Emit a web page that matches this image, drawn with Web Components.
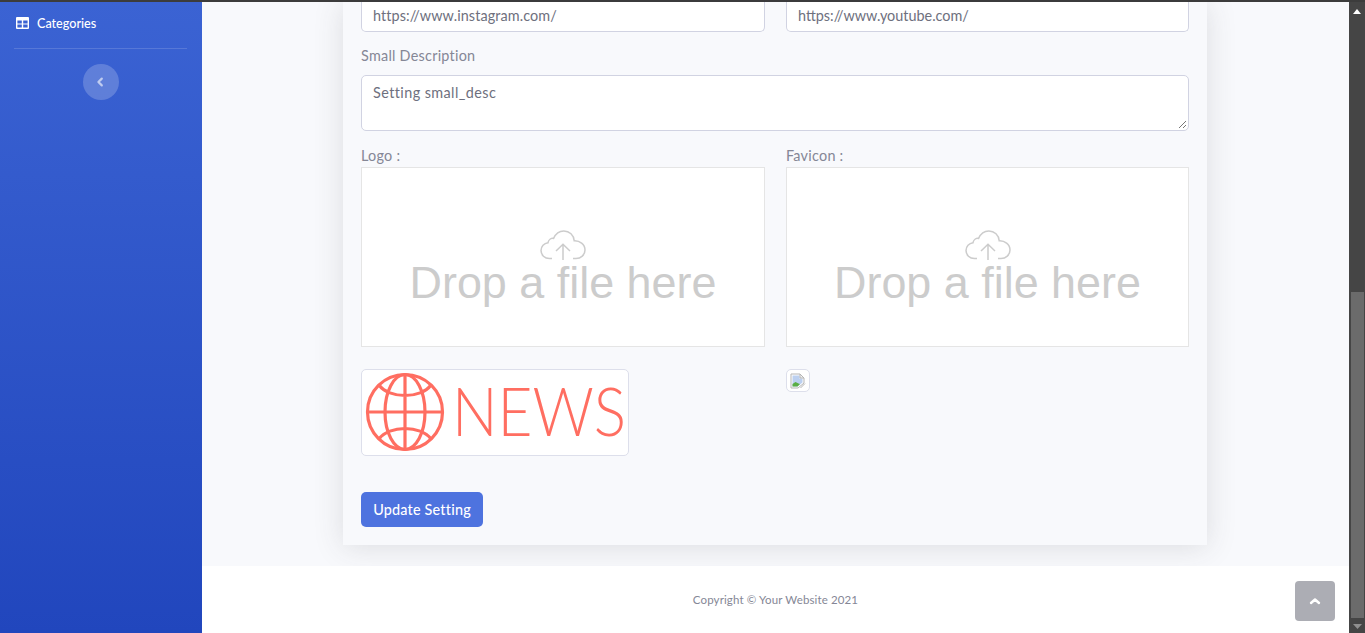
<!DOCTYPE html>
<html><head><meta charset="utf-8"><style>
html,body{margin:0;padding:0;height:633px;overflow:hidden;background:#f8f9fc}
body{font-family:Lato,"Open Sans",sans-serif}
</style></head><body>
<app-shell>
  <side-bar slot="side">
    <nav-item>Categories</nav-item>
  </side-bar>
  <setting-form slot="main"></setting-form>
  <page-footer slot="footer">Copyright © Your Website 2021</page-footer>
  <fake-scrollbar slot="bar"></fake-scrollbar>
</app-shell>
<script>
function def(name, css, html){
  customElements.define(name, class extends HTMLElement{
    constructor(){super();this.attachShadow({mode:'open'}).innerHTML='<style>'+css+'</style>'+html;}
  });
}
def('app-shell',`
 :host{display:flex;flex-direction:column;height:633px;width:1365px;position:relative;overflow:hidden}
 .strip{height:2px;background:#3c3c3c;flex:none}
 .row{display:flex;flex:1;min-height:0}
 .col{flex:1;display:flex;flex-direction:column;min-width:0}
 .body{flex:1;min-height:0}
`,`<div class="strip"></div><div class="row"><slot name="side"></slot><div class="col"><div class="body"><slot name="main"></slot></div><slot name="footer"></slot></div><slot name="bar"></slot></div>`);
def('side-bar',`
 :host{display:block;width:202px;flex:none;background:linear-gradient(180deg,#3b63d3 0%,#2146bd 100%);box-sizing:border-box;padding:0 15px}
 .hr{height:1px;background:rgba(255,255,255,.15);margin:4px 0 15px -1px}
 .toggle{width:36px;height:36px;border-radius:50%;background:rgba(255,255,255,.2);margin:0 auto;display:flex;align-items:center;justify-content:center}
 svg{display:block;margin-left:-2px}
`,`<slot></slot><div class="hr"></div><div class="toggle"><svg width="8" height="10" viewBox="0 0 8 10"><path d="M5.8 1.6L2.4 5l3.4 3.4" fill="none" stroke="#fff" stroke-opacity=".6" stroke-width="2.2" stroke-linecap="round" stroke-linejoin="round"/></svg></div>`);
def('nav-item',`
 :host{display:flex;align-items:center;gap:8px;height:42px;padding-left:1px;color:#fff;font:500 12.6px Lato,sans-serif;box-sizing:border-box}
 svg{display:block;flex:none}
`,`<svg width="13" height="12" viewBox="0 0 13 12"><path fill="#fff" fill-rule="evenodd" d="M1 0h11a1 1 0 0 1 1 1v10a1 1 0 0 1-1 1H1a1 1 0 0 1-1-1V1a1 1 0 0 1 1-1zm.4 3.600v2.800h4.400V3.600zm5.800 0v2.800h4.400V3.600zM1.400 7.400v3.200h4.400V7.400zm5.800 0v3.200h4.400V7.400z"/></svg><span><slot></slot></span>`);
def('text-field',`
 :host{display:block;box-sizing:border-box;background:#fff;border:1px solid #d1d3e2;border-radius:5px;color:#6e707e;font:400 14.4px Lato,sans-serif;padding:0 11px;letter-spacing:.25px}
`,`<slot></slot>`);
def('drop-zone',`
 :host{display:flex;flex-direction:column;align-items:center;box-sizing:border-box;height:180px;background:#fff;border:1px solid #e5e5e5;padding-top:62px;color:#ccc;font:400 44.9px/1 "Liberation Sans",Arial,sans-serif}
 svg{display:block;margin-bottom:1px;position:relative}
`,`<svg width="46" height="30" viewBox="0 0 46 30" fill="none" stroke="#ccc" stroke-width="1.500"><path d="M12 28.5H9.5C4.6 28.5 1 25 1 20.6c0-4 3-7.4 7-7.9C8.6 9.700 11 8 13.600 8.400 15.600 3.800 19.500 1 23.800 1c5.700 0 10 4.300 10.400 9.700 5.300-.3 10.800 3.500 10.800 9.300 0 5-4.200 8.500-9 8.500H33"/><path d="M23 30V14.500M16 21l7-6.800L30 21"/></svg><span>Drop a file here</span>`);
def('news-logo',`
 :host{display:block;box-sizing:border-box;width:268px;height:87px;background:#fff;border:1px solid #dddfeb;border-radius:5px}
 svg{display:block}
 text{font-family:Lato,sans-serif;font-weight:300}
`,`<svg width="266" height="85" viewBox="0 0 266 85" fill="none" stroke="#ff6e61" stroke-width="3.2"><g transform="translate(43,42)"><circle r="37.500"/><ellipse rx="20" ry="37.500"/><path d="M0-37.500V37.500M-37.500 0H37.500M-26-27C-16-13 16-13 26-27M-26 27C-16 13 16 13 26 27"/></g><text transform="translate(90,66) scale(.9,1)" font-size="67" fill="#ff6e61" stroke="none">NEWS</text></svg>`);
def('broken-thumb',`
 :host{display:block;box-sizing:border-box;width:24px;height:23px;background:#fff;border:1px solid #dddfeb;border-radius:5px;padding:3px}
 svg{display:block}
`,`<svg width="16" height="16" viewBox="0 0 16 16"><path d="M1 1h9l4 4v5l-6 5H1z" fill="#fff" stroke="#b5b5b5"/><path d="M2.500 2.500h7v3h3v4L7.500 13.500h-5z" fill="#bcd0f0"/><path d="M2.500 13.500V11l3-2 3 1.500 1.500.5-2.500 2.500z" fill="#5aae45"/><path d="M10 1v4h4z" fill="#f2f2f2" stroke="#b5b5b5"/><path d="M10.500 15l4.500-4.500" stroke="#b5b5b5"/></svg>`);
def('form-label',`
 :host{display:block;color:#858796;font:400 14.4px/20px Lato,sans-serif;letter-spacing:.25px}
`,`<slot></slot>`);
def('setting-form',`
 :host{display:block;width:864px;margin-left:141px;box-sizing:border-box;height:543px;padding:0 18px;background:#f8f9fc;box-shadow:0 2.400px 28px rgba(58,59,69,.15);position:relative}
 .grid{display:grid;grid-template-columns:404px 403px;column-gap:21px}
 .top text-field{height:30px;line-height:27px;border-top-width:0;border-radius:0 0 5px 5px}
 .l1{margin-top:14px}
 .area{height:56px;margin-top:9px;padding-top:7px;line-height:20px;position:relative;letter-spacing:.42px}
 .grip{position:absolute;right:1px;bottom:1px;display:block}
 .up{margin-top:15px}
 .up form-label{height:21px;line-height:20px}
 .thumbs{margin-top:22px;height:87px}
 .btn{margin-top:36px;width:122px;height:35px;background:#4e73df;color:#fff;border-radius:5px;font:500 14.4px/35px Lato,sans-serif;text-align:center;letter-spacing:.2px}
`,`<div class="grid top"><text-field style="letter-spacing:.1px">https://www.instagram.com/</text-field><text-field style="letter-spacing:0">https://www.youtube.com/</text-field></div>
<form-label class="l1">Small Description</form-label>
<text-field class="area">Setting small_desc<svg class="grip" width="10" height="10" viewBox="0 0 10 10" stroke="#777" stroke-width="1"><path d="M9 2L2 9M9 6L6 9"/></svg></text-field>
<div class="grid up"><div><form-label>Logo :</form-label><drop-zone></drop-zone></div><div><form-label>Favicon :</form-label><drop-zone></drop-zone></div></div>
<div class="grid thumbs"><news-logo></news-logo><broken-thumb></broken-thumb></div>
<div class="btn">Update Setting</div>`);
def('page-footer',`
 :host{display:flex;align-items:center;justify-content:center;flex:none;height:67px;margin-top:21px;background:#fff;color:#858796;font:400 11.5px Lato,sans-serif;letter-spacing:.13px;position:relative}
 .top{position:absolute;right:14px;top:15px;width:40px;height:40px;border-radius:4px;background:#acadb4;display:flex;align-items:center;justify-content:center}
`,`<span><slot></slot></span><div class="top"><svg width="12" height="8" viewBox="0 0 12 8"><path d="M2 6l4-3.500L10 6" fill="none" stroke="#fff" stroke-width="2.400" stroke-linecap="round" stroke-linejoin="round"/></svg></div>`);
def('fake-scrollbar',`
 :host{display:flex;flex-direction:column;align-items:center;width:16px;flex:none;background:#454545;position:relative}
 .up{margin-top:7px;display:block;flex:none}
 .sp{height:278px;flex:none}
 .th{width:13px;height:326px;background:#6b6b6b;flex:none;margin-left:1px}
 .dn{margin-top:6px;display:block}
`,`<svg class="up" width="8" height="5" viewBox="0 0 8 5"><path d="M4 0l4 5H0z" fill="#fff"/></svg><div class="sp"></div><div class="th"></div><svg class="dn" width="9" height="6" viewBox="0 0 9 6"><path d="M0 0h9L4.500 5z" fill="#8f8f8f"/></svg>`);
</script>
</body></html>
